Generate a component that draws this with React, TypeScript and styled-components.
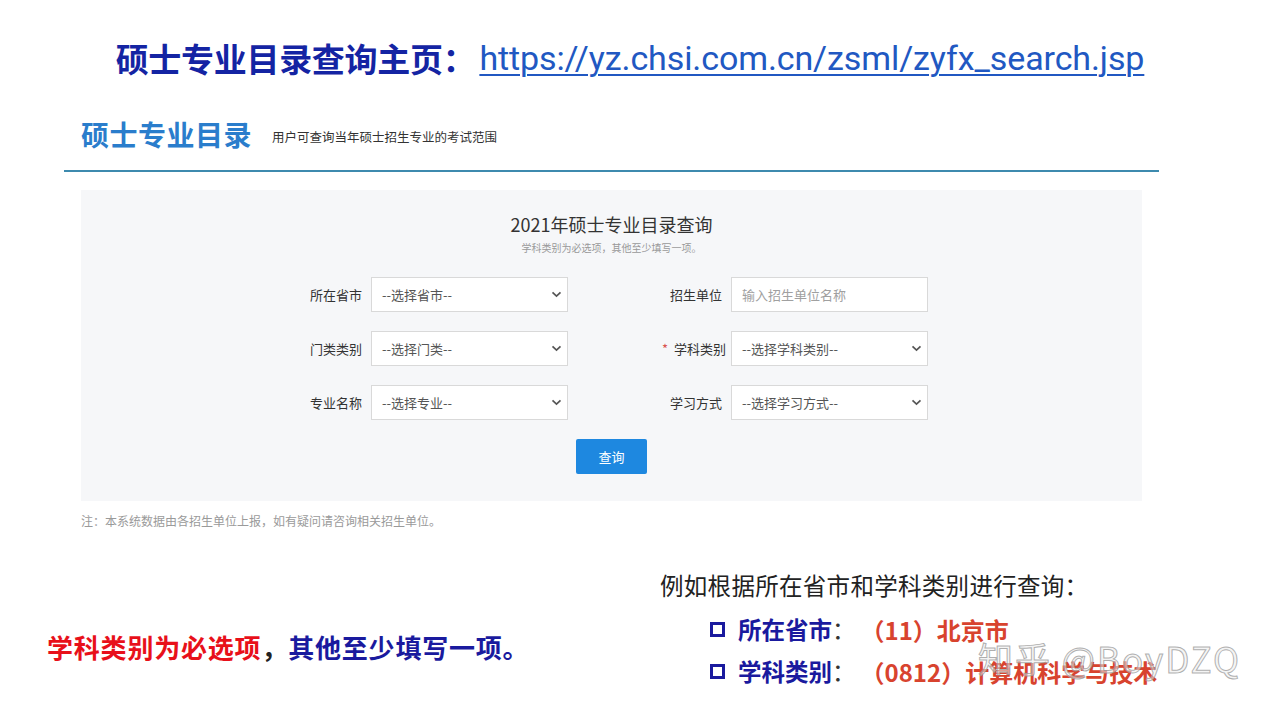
import React from 'react';
import styled, { createGlobalStyle } from 'styled-components';

const GlobalStyle = createGlobalStyle`
  html, body {
    margin: 0;
    padding: 0;
    background: #ffffff;
  }
  body {
    font-family: "Noto Sans CJK SC", "Noto Sans", sans-serif;
  }
`;

const CJK = `"Noto Sans CJK SC", "Noto Sans", sans-serif`;

const Page = styled.div`
  position: relative;
  width: 1274px;
  height: 713px;
  overflow: hidden;
  background: #fff;
  display: flex;
  flex-direction: column;
`;

const TitleRow = styled.div`
  margin-top: 36px;
  height: 44px;
  display: flex;
  justify-content: center;
  align-items: center;
  padding-right: 14px;
`;

const TitleText = styled.span`
  font-family: ${CJK};
  font-weight: 700;
  font-size: 33px;
  color: #1424a3;
  letter-spacing: -0.3px;
`;

const TitleLink = styled.a`
  font-family: Roboto, "Liberation Sans", sans-serif;
  font-size: 34px;
  color: #2158c2;
  text-decoration: underline;
  text-decoration-thickness: 2px;
  text-underline-offset: 4px;
  letter-spacing: -0.1px;
  margin-left: 4px;
`;

const Header = styled.div`
  margin: 34px 0 0 64px;
  width: 1078px;
  height: 40px;
  padding: 0 0 16px 17px;
  display: flex;
  align-items: center;
  gap: 20px;
  border-bottom: 2px solid #3d8aae;
  box-sizing: content-box;
`;

const HeaderTitle = styled.h1`
  margin: 0;
  font-family: ${CJK};
  font-weight: 700;
  font-size: 28px;
  color: #2a7dcc;
  letter-spacing: 0.5px;
`;

const HeaderSub = styled.span`
  font-family: ${CJK};
  font-size: 12.5px;
  color: #333;
  padding-top: 4px;
`;

const Panel = styled.section`
  margin: 18px 0 0 81px;
  width: 1061px;
  background: #f6f7f9;
  padding: 24px 0 27px;
  display: flex;
  flex-direction: column;
  align-items: center;
`;

const PanelTitle = styled.h2`
  margin: 0;
  font-family: ${CJK};
  font-weight: 400;
  font-size: 18px;
  line-height: 20px;
  color: #333;
`;

const PanelHint = styled.p`
  margin: 7px 0 0;
  font-family: ${CJK};
  font-size: 10px;
  line-height: 14px;
  color: #999;
`;

const FormGrid = styled.div`
  margin: 22px 0 0 7px;
  display: grid;
  grid-template-columns: 266px 266px;
  column-gap: 94px;
  row-gap: 19px;
`;

const Field = styled.div`
  display: grid;
  grid-template-columns: 60px 197px;
  column-gap: 9px;
  align-items: center;
`;

const Label = styled.label`
  font-family: ${CJK};
  font-size: 13px;
  color: #333;
  text-align: right;
  white-space: nowrap;
`;

const Star = styled.span`
  color: #d9534f;
  margin-right: 6px;
`;

const Control = styled.div<{ $placeholder?: boolean }>`
  height: 35px;
  box-sizing: border-box;
  border: 1px solid #d9d9d9;
  background: #fff;
  padding: 0 5px 0 10px;
  display: flex;
  align-items: center;
  justify-content: space-between;
  font-family: ${CJK};
  font-size: 13px;
  color: ${(p) => (p.$placeholder ? '#a0a0a0' : '#555')};
`;

const QueryButton = styled.button`
  margin-top: 19px;
  width: 71px;
  height: 35px;
  border: none;
  border-radius: 2px;
  background: #1e88e0;
  color: #fff;
  font-family: ${CJK};
  font-size: 13px;
  cursor: pointer;
`;

const Note = styled.p`
  margin: 12px 0 0 81px;
  font-family: ${CJK};
  font-size: 12px;
  line-height: 16px;
  color: #9a9a9a;
`;

const Bottom = styled.div`
  margin-top: 41px;
  display: grid;
  grid-template-columns: 613px 1fr;
  padding-left: 47px;
`;

const Emphasis = styled.p`
  margin: 60px 0 0;
  font-family: ${CJK};
  font-weight: 700;
  font-size: 26px;
  line-height: 34px;
  letter-spacing: 0.8px;
  white-space: nowrap;
`;

const Tone = styled.span<{ $c: string }>`
  color: ${(p) => p.$c};
`;

const Example = styled.div`
  display: flex;
  flex-direction: column;
`;

const ExampleIntro = styled.p`
  margin: 0 0 8px;
  font-family: ${CJK};
  font-size: 23.5px;
  line-height: 30px;
  color: #222;
  letter-spacing: 0.3px;
  white-space: nowrap;
`;

const Bullet = styled.div`
  display: flex;
  align-items: center;
  padding-left: 50px;
  height: 42px;
  font-family: ${CJK};
  font-size: 23.5px;
  white-space: nowrap;
`;

const Square = styled.span`
  width: 15px;
  height: 15px;
  box-sizing: border-box;
  border: 3.5px solid #1a1a9e;
  margin-right: 13px;
`;

const Key = styled.span`
  font-weight: 700;
  color: #1a1a9e;
`;

const Colon = styled.span`
  color: #333;
  margin: 0 5px 0 0;
`;

const Value = styled.span`
  font-weight: 700;
  font-size: 24px;
  color: #d8432e;
`;

const Watermark = styled.div`
  position: absolute;
  left: 978px;
  top: 632px;
  font-family: ${CJK};
  font-size: 35px;
  letter-spacing: 2px;
  color: rgba(235, 235, 235, 0.55);
  -webkit-text-stroke: 1px rgba(150, 150, 150, 0.75);
  pointer-events: none;
  white-space: nowrap;
`;

const Chevron = () => (
  <svg width="11" height="7" viewBox="0 0 11 7">
    <path d="M1.5 1.3 L5.5 5.1 L9.5 1.3" fill="none" stroke="#555" strokeWidth="1.7" />
  </svg>
);

const fields: { label: string; value: string; required?: boolean; input?: boolean }[] = [
  { label: '所在省市', value: '--选择省市--' },
  { label: '招生单位', value: '输入招生单位名称', input: true },
  { label: '门类类别', value: '--选择门类--' },
  { label: '学科类别', value: '--选择学科类别--', required: true },
  { label: '专业名称', value: '--选择专业--' },
  { label: '学习方式', value: '--选择学习方式--' }
];

const App: React.FC = () => {
  return (
    <Page>
      <GlobalStyle />
      <TitleRow>
        <TitleText>硕士专业目录查询主页：</TitleText>
        <TitleLink href="#">https://yz.chsi.com.cn/zsml/zyfx_search.jsp</TitleLink>
      </TitleRow>

      <Header>
        <HeaderTitle>硕士专业目录</HeaderTitle>
        <HeaderSub>用户可查询当年硕士招生专业的考试范围</HeaderSub>
      </Header>

      <Panel>
        <PanelTitle>2021年硕士专业目录查询</PanelTitle>
        <PanelHint>学科类别为必选项，其他至少填写一项。</PanelHint>
        <FormGrid>
          {fields.map((f) => (
            <Field key={f.label}>
              <Label>
                {f.required && <Star>*</Star>}
                {f.label}
              </Label>
              <Control $placeholder={f.input}>
                <span>{f.value}</span>
                {!f.input && <Chevron />}
              </Control>
            </Field>
          ))}
        </FormGrid>
        <QueryButton>查询</QueryButton>
      </Panel>

      <Note>注：本系统数据由各招生单位上报，如有疑问请咨询相关招生单位。</Note>

      <Bottom>
        <Emphasis>
          <Tone $c="#e8101a">学科类别为必选项</Tone>
          <Tone $c="#222">，</Tone>
          <Tone $c="#1a1a9e">其他至少填写一项。</Tone>
        </Emphasis>
        <Example>
          <ExampleIntro>例如根据所在省市和学科类别进行查询：</ExampleIntro>
          <Bullet>
            <Square />
            <Key>所在省市</Key>
            <Colon>：</Colon>
            <Value>（11）北京市</Value>
          </Bullet>
          <Bullet>
            <Square />
            <Key>学科类别</Key>
            <Colon>：</Colon>
            <Value>（0812）计算机科学与技术</Value>
          </Bullet>
        </Example>
      </Bottom>

      <Watermark>知乎 @BoyDZQ</Watermark>
    </Page>
  );
};

export default App;
